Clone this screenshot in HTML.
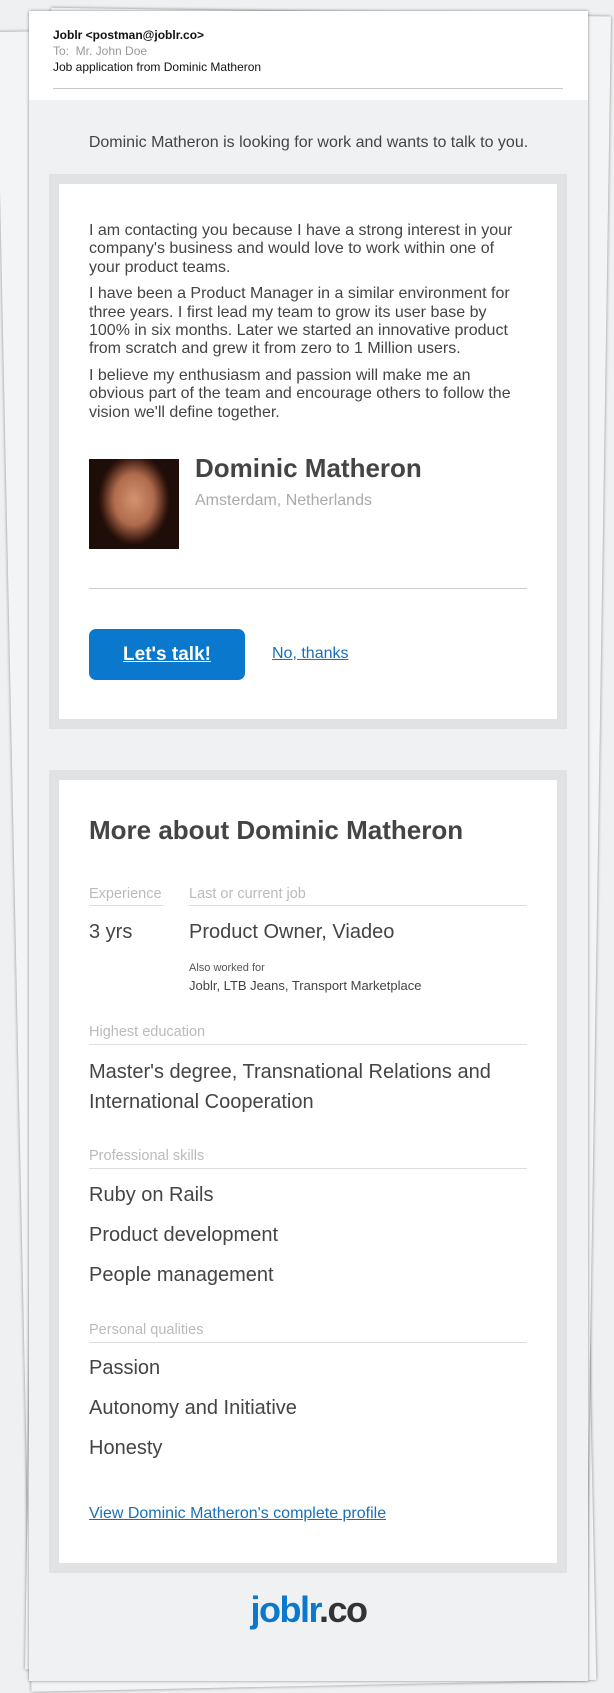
<!DOCTYPE html>
<html><head><meta charset="utf-8"><style>
*{margin:0;padding:0;box-sizing:border-box}
body{width:614px;height:1693px;background:#eff0f1;position:relative;overflow:hidden;font-family:"Liberation Sans",Arial,sans-serif;color:#444}
.p{position:absolute;background:#fff;box-shadow:0 0 3px rgba(0,0,0,.45)}
.a{position:absolute;white-space:nowrap}
.lbl{font-size:14.5px;color:#bbb}
.ln{position:absolute;height:1px;background:#ccc}
.big{font-size:20px;color:#444}
a{color:#1a6fba;text-decoration:underline}
</style></head><body>
<div class="p" style="left:14px;top:26px;width:565px;height:1660px;transform:rotate(-1.2deg);background:#f3f4f5"></div>
<div class="p" style="left:38px;top:12px;width:560px;height:1662px;transform:rotate(0.9deg);background:#f3f4f5"></div>
<div class="p" style="left:29px;top:11px;width:559px;height:1670px;background:#f0f1f2"></div>
<div style="position:absolute;left:29px;top:11px;width:559px;height:89px;background:#fff"></div>
<div class="a" style="left:53px;top:28px;font-size:12px;font-weight:bold;color:#111">Joblr &lt;postman@joblr.co&gt;</div>
<div class="a" style="left:53px;top:44px;font-size:12px;color:#999">To:&nbsp; Mr. John Doe</div>
<div class="a" style="left:53px;top:60px;font-size:12px;color:#111">Job application from Dominic Matheron</div>
<div class="ln" style="left:53px;top:88px;width:510px;background:#c8c8c8"></div>
<div class="a" style="left:29px;width:559px;text-align:center;top:134px;font-size:16px;color:#444">Dominic Matheron is looking for work and wants to talk to you.</div>

<div style="position:absolute;left:49px;top:174px;width:518px;height:555px;background:#fff;border:10px solid #e1e2e3"></div>
<div style="position:absolute;left:89px;top:222px;width:432px;font-size:16px;line-height:18.4px;color:#444">
<p style="margin-bottom:8px">I am contacting you because I have a strong interest in your company's business and would love to work within one of your product teams.</p>
<p style="margin-bottom:8px">I have been a Product Manager in a similar environment for three years. I first lead my team to grow its user base by 100% in six months. Later we started an innovative product from scratch and grew it from zero to 1 Million users.</p>
<p>I believe my enthusiasm and passion will make me an obvious part of the team and encourage others to follow the vision we'll define together.</p>
</div>
<div style="position:absolute;left:89px;top:459px;width:90px;height:90px;background:radial-gradient(ellipse 36px 46px at 50% 45%,#d39370 0%,#b06b4d 55%,#3a1a10 90%,#1e0d08 100%)"></div>
<div class="a" style="left:195px;top:453px;font-size:26px;font-weight:bold;color:#444">Dominic Matheron</div>
<div class="a" style="left:195px;top:492px;font-size:16px;color:#aaa">Amsterdam, Netherlands</div>
<div class="ln" style="left:89px;top:588px;width:438px"></div>
<div style="position:absolute;left:89px;top:629px;width:156px;height:51px;background:#0a78cc;border-radius:7px;color:#fff;font-size:19px;font-weight:bold;text-align:center;line-height:51px;text-decoration:underline">Let's talk!</div>
<a class="a" style="left:272px;top:645px;font-size:16px">No, thanks</a>

<div style="position:absolute;left:49px;top:770px;width:518px;height:803px;background:#fff;border:10px solid #e1e2e3"></div>
<div class="a" style="left:89px;top:815px;font-size:26px;font-weight:bold;color:#444">More about Dominic Matheron</div>
<div class="a lbl" style="left:89px;top:886px">Experience</div>
<div class="a lbl" style="left:189px;top:886px">Last or current job</div>
<div class="ln" style="left:89px;top:905px;width:74px;background:#ddd"></div>
<div class="ln" style="left:189px;top:905px;width:338px;background:#ddd"></div>
<div class="a big" style="left:89px;top:921px">3 yrs</div>
<div class="a big" style="left:189px;top:921px">Product Owner, Viadeo</div>
<div class="a" style="left:189px;top:962px;font-size:11px;color:#555">Also worked for</div>
<div class="a" style="left:189px;top:978px;font-size:13px;color:#444">Joblr, LTB Jeans, Transport Marketplace</div>
<div class="a lbl" style="left:89px;top:1024px">Highest education</div>
<div class="ln" style="left:89px;top:1044px;width:438px;background:#ddd"></div>
<div style="position:absolute;left:89px;top:1057px;width:445px;font-size:20px;line-height:30px;color:#444">Master's degree, Transnational Relations and International Cooperation</div>
<div class="a lbl" style="left:89px;top:1148px">Professional skills</div>
<div class="ln" style="left:89px;top:1168px;width:438px;background:#ddd"></div>
<div class="a big" style="left:89px;top:1184px">Ruby on Rails</div>
<div class="a big" style="left:89px;top:1224px">Product development</div>
<div class="a big" style="left:89px;top:1264px">People management</div>
<div class="a lbl" style="left:89px;top:1322px">Personal qualities</div>
<div class="ln" style="left:89px;top:1342px;width:438px;background:#ddd"></div>
<div class="a big" style="left:89px;top:1357px">Passion</div>
<div class="a big" style="left:89px;top:1397px">Autonomy and Initiative</div>
<div class="a big" style="left:89px;top:1437px">Honesty</div>
<a class="a" style="left:89px;top:1505px;font-size:16px">View Dominic Matheron's complete profile</a>
<div class="a" style="left:29px;width:559px;text-align:center;top:1589px;font-size:36px;font-weight:bold;letter-spacing:-1.5px"><span style="color:#0a78cc">joblr</span><span style="color:#333">.co</span></div>
</body></html>
